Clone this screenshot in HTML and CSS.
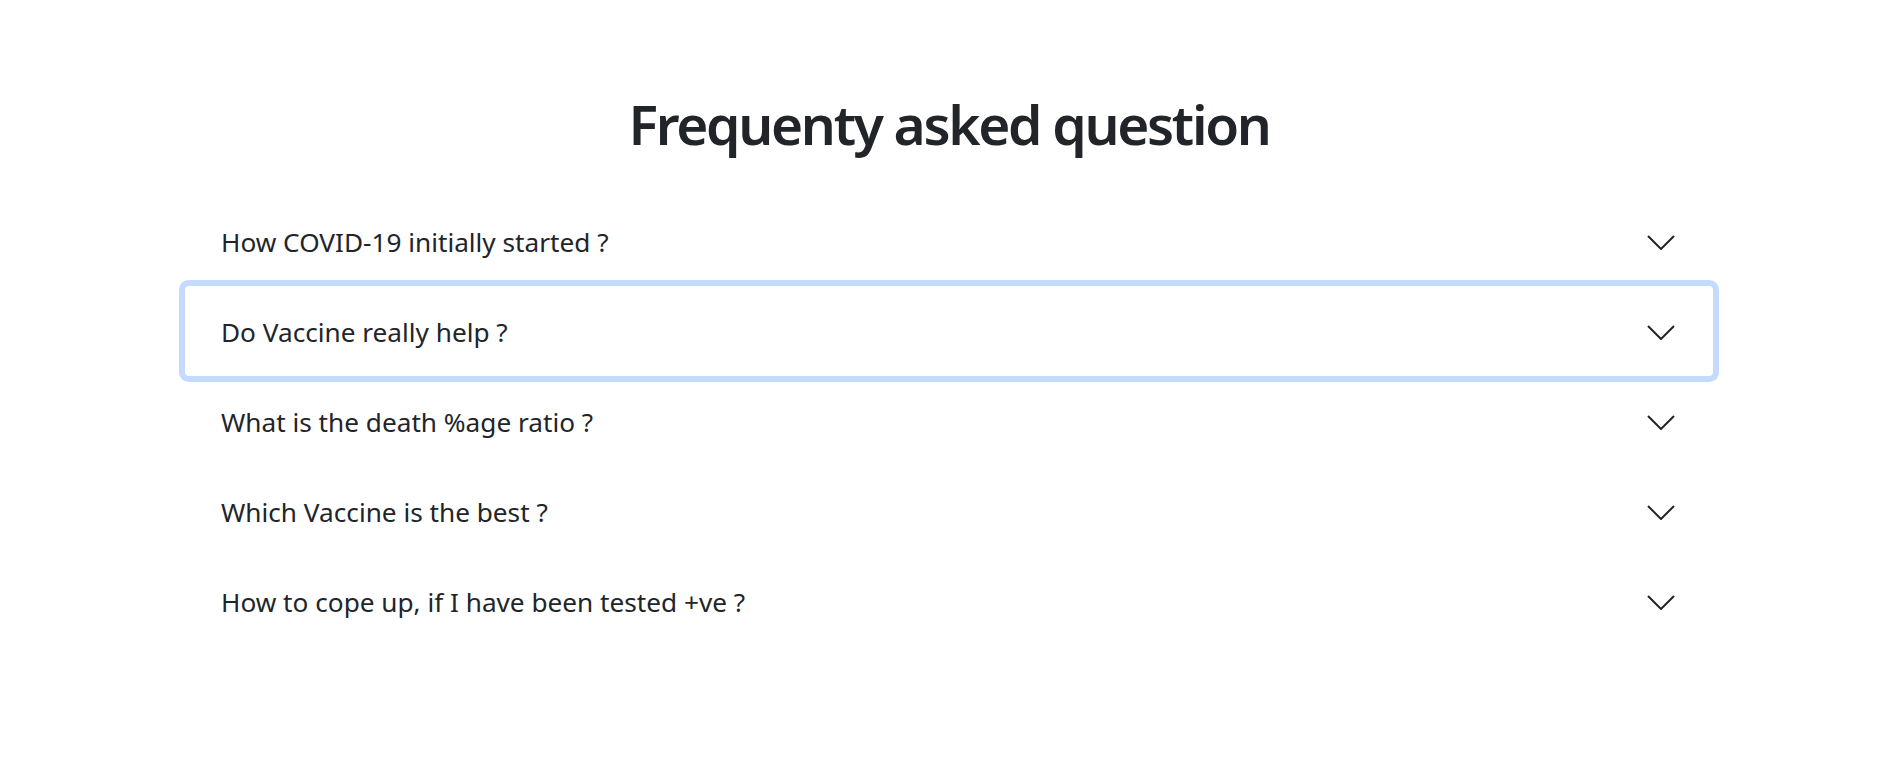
FILE: index.html
```html
<!DOCTYPE html>
<html lang="en">
<head>
<meta charset="utf-8">
<title>FAQ</title>
<link rel="stylesheet" href="styles.css">
</head>
<body>
<main class="faq">
  <h1 class="faq-title">Frequenty asked question</h1>
  <div class="accordion">
    <div class="acc-item">
      <button class="acc-btn" type="button"><span class="acc-text">How COVID-19 initially started ?</span><svg class="chev" viewBox="0 0 28 15" width="28" height="15"><polyline points="1,1 14,14 27,1"/></svg></button>
    </div>
    <div class="acc-item">
      <button class="acc-btn is-focused" type="button"><span class="acc-text">Do Vaccine really help ?</span><svg class="chev" viewBox="0 0 28 15" width="28" height="15"><polyline points="1,1 14,14 27,1"/></svg></button>
    </div>
    <div class="acc-item">
      <button class="acc-btn" type="button"><span class="acc-text">What is the death %age ratio ?</span><svg class="chev" viewBox="0 0 28 15" width="28" height="15"><polyline points="1,1 14,14 27,1"/></svg></button>
    </div>
    <div class="acc-item">
      <button class="acc-btn" type="button"><span class="acc-text">Which Vaccine is the best ?</span><svg class="chev" viewBox="0 0 28 15" width="28" height="15"><polyline points="1,1 14,14 27,1"/></svg></button>
    </div>
    <div class="acc-item">
      <button class="acc-btn" type="button"><span class="acc-text">How to cope up, if I have been tested +ve ?</span><svg class="chev" viewBox="0 0 28 15" width="28" height="15"><polyline points="1,1 14,14 27,1"/></svg></button>
    </div>
  </div>
</main>
</body>
</html>
```

FILE: styles.css
```css
html, body {
  margin: 0;
  background: #ffffff;
}

body {
  font-family: "Noto Sans", "Open Sans", "Liberation Sans", sans-serif;
  color: #212529;
}

.faq {
  padding: 92px 180px 0 185px;
}

.faq-title {
  margin: 0 0 40px;
  text-align: center;
  font-size: 55px;
  line-height: 64px;
  font-weight: 600;
  letter-spacing: -2.3px;
  color: #212529;
}

.accordion {
  display: flex;
  flex-direction: column;
}

.acc-item {
  background: #ffffff;
}

.acc-btn {
  box-sizing: border-box;
  width: 100%;
  height: 90px;
  display: flex;
  align-items: center;
  justify-content: space-between;
  padding: 28px 38px 26px 36px;
  border: 0;
  margin: 0;
  background: #ffffff;
  font-family: inherit;
  font-size: 26.2px;
  line-height: 36px;
  font-weight: 400;
  color: #212529;
  text-align: left;
  cursor: pointer;
}

.acc-btn.is-focused {
  position: relative;
  z-index: 1;
  border-radius: 4px;
  box-shadow: 0 0 0 6px #c2dbfe;
}

.chev {
  flex: none;
  fill: none;
  stroke: #212529;
  stroke-width: 2;
}
```
